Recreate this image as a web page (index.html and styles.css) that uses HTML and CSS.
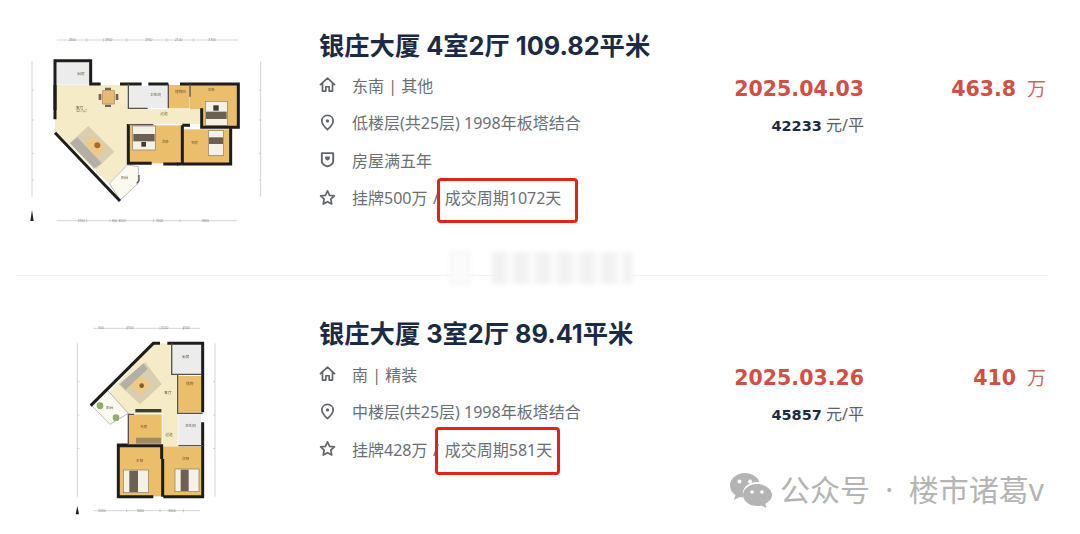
FILE: index.html
```html
<!DOCTYPE html>
<html lang="zh-CN">
<head>
<meta charset="utf-8">
<title>银庄大厦 成交记录</title>
<link rel="stylesheet" href="styles.css">
</head>
<body>
<svg class="defs" width="0" height="0" aria-hidden="true">
  <defs>
    <symbol id="i-home" viewBox="0 0 18 18"><path d="M1.500 9.200 9 2.200l7.500 7M3.700 7.600V16h3.500v-4.600h3.600V16h3.500V7.600" fill="none" stroke="currentColor" stroke-width="1.800" stroke-linejoin="round" stroke-linecap="round"/></symbol>
    <symbol id="i-pin" viewBox="0 0 18 18"><path d="M9 1.500c-3.400 0-6 2.500-6 5.800 0 3.500 3.500 6.800 6 9.200 2.500-2.400 6-5.700 6-9.200 0-3.300-2.600-5.800-6-5.800Z" fill="none" stroke="currentColor" stroke-width="1.800"/><circle cx="9" cy="7.300" r="1.800" fill="currentColor"/></symbol>
    <symbol id="i-shield" viewBox="0 0 18 18"><path d="M3 2.200h12V11c0 2.700-3.300 4.300-6 5.300-2.700-1-6-2.600-6-5.300Z" fill="none" stroke="currentColor" stroke-width="2" stroke-linejoin="round"/><path d="M6.500 5.800h5v2.800L9 10.300 6.500 8.600Z" fill="currentColor"/></symbol>
    <symbol id="i-star" viewBox="0 0 18 18"><path d="m9 2 2.200 4.700 5.100.6-3.800 3.500 1 5.100L9 13.400l-4.500 2.500 1-5.100-3.800-3.500 5.100-.6Z" fill="none" stroke="currentColor" stroke-width="1.800" stroke-linejoin="round"/></symbol>
  </defs>
</svg>

<article class="deal deal-first">
  <div class="plan-cell">
    <svg class="plan" width="250" height="220" viewBox="0 0 750 660">
      <g class="dim">
        <path d="M110 60H655M110 602H650M36 125V530M722 125V530"/>
        <path d="M200 55v10M250 55v10M320 55v10M440 55v10M520 55v10M200 597v10M270 597v10M400 597v10M480 597v10M36 210h6M36 300h6M36 400h6M36 480h6M722 210h-6M722 300h-6M722 400h-6M722 480h-6"/>
      </g>
      <g class="dimt">
        <text x="146" y="63">2600</text><text x="255" y="63">2800</text><text x="375" y="63">2950</text><text x="465" y="63">2100</text><text x="565" y="63">3700</text>
        <text x="173" y="605">2700</text><text x="275" y="605">900 3200</text><text x="408" y="605">3300</text><text x="545" y="605">2800</text>
      </g>
      <path class="floor-cream" d="M105 195H322V268H540V312H325V430L265 490 105 335Z"/>
      <rect class="floor-grey" x="108" y="128" width="102" height="66"/>
      <rect class="floor-grey" x="325" y="198" width="120" height="66"/>
      <rect class="floor-wood" x="447" y="195" width="62" height="70"/>
      <path class="floor-wood" d="M510 195H652V322H545V268H510Z"/>
      <rect class="floor-wood" x="327" y="316" width="158" height="114"/>
      <rect class="floor-wood" x="487" y="328" width="143" height="102"/>
      <path class="floor-white" d="M322 435 355 440V490L300 540 268 490Z"/>
      <path class="rug" d="M205 318 283 395 228 447 150 368Z"/>
      <path class="rug-in" d="M212 345 258 385 230 412 195 372Z"/>
      <path class="sofa" d="M172 352 245 430 222 445 150 370Z"/>
      <circle cx="232" cy="376" r="9" fill="#a9692f"/>
      <rect class="table" x="248" y="212" width="35" height="40"/>
      <path class="chair" d="M236 222h8v18h-8ZM287 222h8v18h-8ZM255 203h18v7h-18ZM255 254h18v7h-18Z"/>
      <g class="bed"><rect class="sheet" x="556" y="244" width="66" height="72"/><rect class="quilt" x="558" y="275" width="62" height="22"/><rect class="quilt-dark" x="580" y="256" width="16" height="16"/></g>
      <g class="bed"><rect class="sheet" x="338" y="318" width="68" height="72"/><rect class="quilt" x="340" y="342" width="64" height="22"/><rect class="quilt-dark" x="364" y="366" width="14" height="14"/></g>
      <g class="bed"><rect class="sheet" x="565" y="332" width="46" height="74"/><rect class="quilt" x="567" y="352" width="42" height="20"/></g>
      <g class="walls">
        <path d="M105 270V122H212V192H242M300 192H365M385 192H445M480 192H655V322H545V265"/>
        <path d="M105 195V298M105 338 300 543M325 312V430H395M430 432H475"/>
        <path d="M487 316V430M470 432H632V325M487 316H510"/>
      </g>
      <g class="walls-thin">
        <path d="M325 192V265H383M445 192V265M510 192V230M325 314H400M350 490 357 482V465"/>
      </g>
      <g class="room">
        <text x="168" y="266">客厅</text><text x="168" y="276">32.7㎡</text>
        <text x="172" y="166">厨房</text><text x="390" y="227">卫生间</text><text x="421" y="285">过道</text>
        <text x="465" y="220">储物间</text><text x="563" y="213">主卧</text><text x="425" y="370">次卧</text><text x="512" y="373">书房</text><text x="303" y="478">阳台</text>
      </g>
      <path d="M36 570 41 603H31Z" fill="#222"/>
    </svg>
  </div>
  <div class="info">
    <h2 class="title">银庄大厦 4室2厅 109.82平米</h2>
    <ul class="meta">
      <li class="meta-row"><svg class="icon"><use href="#i-home"/></svg><span>东南 | 其他</span></li>
      <li class="meta-row"><svg class="icon"><use href="#i-pin"/></svg><span>低楼层(共25层) 1998年板塔结合</span></li>
      <li class="meta-row"><svg class="icon"><use href="#i-shield"/></svg><span>房屋满五年</span></li>
      <li class="meta-row"><svg class="icon"><use href="#i-star"/></svg><span class="listing">挂牌500万 / <span class="mark mark-long">成交周期1072天</span></span></li>
    </ul>
  </div>
  <div class="date-col">
    <div class="date">2025.04.03</div>
    <div class="unit-price"><b>42233</b> 元/平</div>
  </div>
  <div class="price-col"><b>463.8</b><span class="wan">万</span></div>
</article>

<div class="rule"></div>

<article class="deal deal-second">
  <div class="plan-cell">
    <svg class="plan" width="170" height="210" viewBox="0 0 510 630">
      <g class="dim">
        <path d="M100 40H420M100 587H420M52 85V545M465 85V545"/>
        <path d="M200 35v10M300 35v10M370 35v10M200 582v10M300 582v10M370 582v10M52 200h6M52 300h6M52 400h6M465 200h-6M465 300h-6M465 400h-6"/>
      </g>
      <g class="dimt">
        <text x="115" y="43">900</text><text x="200" y="43">3700</text><text x="303" y="43">3200</text><text x="368" y="43">2100</text>
        <text x="115" y="590">2600</text><text x="230" y="590">3200</text><text x="325" y="590">3800</text>
      </g>
      <path class="floor-cream" d="M280 85H332V180H353V432H308V295H205L142 240Z"/>
      <path class="floor-white" d="M95 272 142 225 205 295 150 328Z"/>
      <rect class="floor-grey" x="335" y="90" width="90" height="90"/>
      <rect class="floor-wood" x="355" y="183" width="68" height="110"/>
      <rect class="floor-grey" x="355" y="298" width="68" height="92"/>
      <rect class="floor-wood" x="205" y="298" width="100" height="90"/>
      <rect class="floor-wood" x="178" y="392" width="127" height="152"/>
      <rect class="floor-wood" x="308" y="395" width="115" height="150"/>
      <path class="rug" d="M256 142 305 208 240 268 176 208Z"/>
      <path class="rug-in" d="M235 180 275 205 245 240 210 215Z"/>
      <path class="sofa" d="M250 145 263 162 196 225 180 207Z"/>
      <circle cx="245" cy="212" r="7" fill="#8a5a2b"/>
      <circle cx="120" cy="272" r="10" fill="#8fae6d"/><circle cx="168" cy="308" r="10" fill="#8fae6d"/>
      <rect class="quilt-band" x="228" y="368" width="75" height="18"/>
      <g class="bed"><rect class="sheet" x="190" y="465" width="75" height="68"/><rect class="quilt" x="208" y="467" width="26" height="64"/></g>
      <g class="bed"><rect class="sheet" x="345" y="462" width="72" height="68"/><rect class="quilt" x="362" y="464" width="24" height="64"/></g>
      <rect x="226" y="282" width="78" height="10" fill="#3c3c38"/>
      <g class="walls">
        <path d="M92 272 280 85H300M322 85H428V292M428 322V545H310M280 545H175V390H205"/>
        <path d="M175 392H305V432M308 432V545"/>
      </g>
      <g class="walls-thin">
        <path d="M335 85V178H423M353 178V295H428M355 392H428M205 390V298H222"/>
      </g>
      <g class="room">
        <text x="366" y="128">厨房</text><text x="313" y="238">客厅</text><text x="378" y="210">储物</text><text x="138" y="282">阳台</text>
        <text x="374" y="337">卫生间</text><text x="240" y="338">书房</text><text x="316" y="362">过道</text><text x="228" y="440">主卧</text><text x="366" y="436">次卧</text>
      </g>
      <path d="M52 572 57 598H47Z" fill="#222"/>
    </svg>
  </div>
  <div class="info">
    <h2 class="title">银庄大厦 3室2厅 89.41平米</h2>
    <ul class="meta">
      <li class="meta-row"><svg class="icon"><use href="#i-home"/></svg><span>南 | 精装</span></li>
      <li class="meta-row"><svg class="icon"><use href="#i-pin"/></svg><span>中楼层(共25层) 1998年板塔结合</span></li>
      <li class="meta-row"><svg class="icon"><use href="#i-star"/></svg><span class="listing">挂牌428万 / <span class="mark mark-short">成交周期581天</span></span></li>
    </ul>
  </div>
  <div class="date-col">
    <div class="date">2025.03.26</div>
    <div class="unit-price"><b>45857</b> 元/平</div>
  </div>
  <div class="price-col"><b>410</b><span class="wan">万</span></div>
</article>

<div class="smudge" aria-hidden="true"><i class="smudge-a"></i><i class="smudge-b"></i></div>

<div class="watermark">
  <svg class="wechat" width="44" height="36" viewBox="0 0 44 36">
    <path d="M16 1C7.500 1 1 6.600 1 13.500c0 3.900 2.100 7.300 5.400 9.500L5 28l5.600-2.900c1.300.3 2.500.5 3.800.5-.4-1.200-.6-2.500-.6-3.800C13.800 15 20 10 27.700 10c1 0 2 .1 2.900.3C28.800 5 23 1 16 1Z" fill="#b4b4b4"/>
    <path d="M28 12c-7.500 0-14 5-14 10.900C14 29 20.500 34 28 34c1.500 0 3-.2 4.400-.6L37.500 36l-1.300-4.300c3.900-2.300 6.800-5.100 6.800-8.800C43 17 35.500 12 28 12Z" fill="#b4b4b4"/>
    <circle cx="10.500" cy="9.500" r="2" fill="#fff"/><circle cx="21" cy="9.500" r="2" fill="#fff"/><circle cx="23" cy="20" r="1.800" fill="#fff"/><circle cx="33" cy="20" r="1.800" fill="#fff"/>
  </svg>
  <span class="wm-text">公众号 · 楼市诸葛v</span>
</div>
</body>
</html>
```

FILE: styles.css
```css
* { box-sizing: border-box; }
html, body { margin: 0; padding: 0; }
body {
  position: relative;
  width: 1080px;
  height: 534px;
  overflow: hidden;
  background: #fff;
  font-family: "Noto Sans", "Noto Sans CJK SC", sans-serif;
  color: #6a6f76;
}
.defs { position: absolute; }

.deal { display: flex; padding-left: 20px; }
.deal-first { height: 275px; }
.deal-second { height: 246px; margin-top: 12px; }

.plan-cell { width: 250px; flex: none; display: flex; justify-content: center; }
.deal-first .plan-cell { padding-top: 20px; }
.deal-second .plan-cell { padding-top: 27px; }
.plan { display: block; filter: blur(0.7px); }

.dim { fill: none; stroke: #a8a8a8; stroke-width: 1.5; }
.dimt { font: 10px "Liberation Sans", sans-serif; fill: #8a8a8a; }
.room { font: 11px "Noto Sans CJK SC", sans-serif; fill: #6b5a3a; }
.walls { fill: none; stroke: #1f1d1b; stroke-width: 9; stroke-linejoin: miter; }
.walls-thin { fill: none; stroke: #55524c; stroke-width: 4; }
.floor-cream { fill: #f5ebc6; }
.floor-grey { fill: #ececec; }
.floor-wood { fill: #ebbe6c; }
.floor-white { fill: #fbfaf1; stroke: #999; stroke-width: 2; }
.rug { fill: #d9cfb0; }
.rug-in { fill: #efc98a; }
.sofa { fill: #b3afa6; }
.table { fill: #e8b877; stroke: #a7814f; stroke-width: 2; }
.chair { fill: #6f6453; }
.sheet { fill: #f4f1e8; stroke: #8a7c62; stroke-width: 2; }
.quilt { fill: #6b6052; }
.quilt-dark { fill: #3f3a33; }
.quilt-band { fill: #a08c62; }

.info { width: 400px; flex: none; margin-left: 49px; }
.title {
  margin: 0;
  padding-top: 28px;
  height: 66px;
  font-family: Inter, "Noto Sans CJK SC", sans-serif;
  font-size: 25.300px;
  line-height: 36px;
  font-weight: 700;
  color: #1c2b45;
  white-space: nowrap;
}
.meta { list-style: none; margin: 0; padding: 0; }
.meta-row {
  display: flex;
  align-items: center;
  height: 37.500px;
  font-size: 16px;
  white-space: nowrap;
}
.deal-second .meta { padding-top: 1px; }
.listing { word-spacing: 1.500px; }
.icon { width: 17px; height: 17px; margin-right: 16px; color: #62666c; flex: none; }

.mark { position: relative; }
.mark::after {
  content: "";
  position: absolute;
  border: 3px solid #e2231a;
  border-radius: 4px;
}
.mark-long::after { inset: -9px -17px -14px -8px; }
.mark-short::after { inset: -12px -8px -14px -10px; }

.date-col { width: 145px; flex: none; text-align: right; padding-top: 74px; }
.deal-second .date-col { padding-top: 75px; }
.date {
  font-family: "DejaVu Sans", sans-serif;
  font-size: 20.500px;
  font-weight: 700;
  line-height: 30px;
  color: #d14f43;
}
.unit-price { margin-top: 10px; font-size: 16px; line-height: 22px; color: #5c6167; }
.unit-price b { font-family: "DejaVu Sans", sans-serif; font-size: 14.500px; color: #1c2b45; }

.price-col {
  width: 182px;
  flex: none;
  padding-top: 74px;
  text-align: right;
  line-height: 30px;
  color: #d14f43;
}
.deal-second .price-col { padding-top: 75px; }
.price-col b { font-family: "DejaVu Sans", sans-serif; font-size: 20.500px; font-weight: 700; }
.wan { margin-left: 11px; font-size: 19px; color: #c9695f; }

.rule { height: 1px; margin: 0 32px 0 16px; background: #f3f3f3; }

.smudge { position: absolute; left: 450px; top: 252px; width: 182px; height: 32px; display: flex; gap: 22px; filter: blur(2.5px); }
.smudge-a { width: 20px; background: #fbfbfb; border: 2px solid #f0f0f0; }
.smudge-b { flex: 1; background: repeating-linear-gradient(90deg, #f1f1f1 0 14px, #fbfbfb 14px 22px); }

.watermark { position: absolute; left: 729px; top: 470px; display: flex; align-items: center; gap: 7px; }
.wm-text { font-size: 30px; line-height: 40px; color: #b4b4b4; white-space: nowrap; word-spacing: 7.500px; }
.wechat { flex: none; }
```
